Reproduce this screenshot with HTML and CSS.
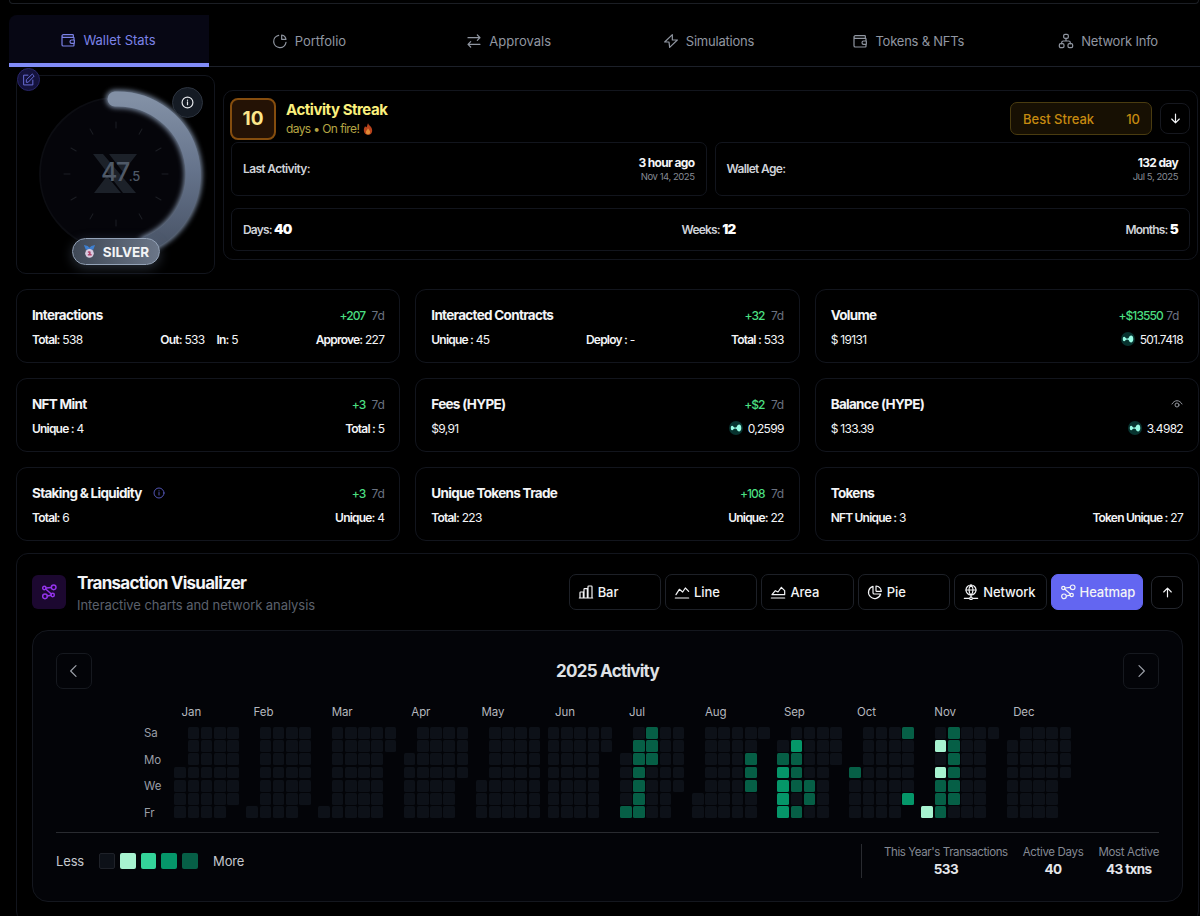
FILE: index.html
```html
<!DOCTYPE html>
<html lang="en">
<head>
    <meta charset="UTF-8">
    <meta name="viewport" content="width=device-width, initial-scale=1.0">
    <title>Wallet Stats</title>
    <link rel="stylesheet" href="styles.css">
</head>
<body>

    <!-- Shared icons -->
    <svg class="sprite">
        <symbol id="i-wallet" viewBox="0 0 24 24"><path d="M20 8V5a1 1 0 0 0-1-1H5a2 2 0 0 0 0 4h15a1 1 0 0 1 1 1v3M3 6v13a2 2 0 0 0 2 2h15a1 1 0 0 0 1-1v-3M21.500 12h-4a2.500 2.500 0 0 0 0 5h4z"/></symbol>
        <symbol id="i-pie" viewBox="0 0 24 24"><path d="M21.500 11a9 9 0 0 0-8-8v7a1 1 0 0 0 1 1zM9 3.500A9.300 9.300 0 1 0 20.500 15H11a2 2 0 0 1-2-2z"/></symbol>
        <symbol id="i-pie-line" viewBox="0 0 24 24"><path d="M21 9.500A8 8 0 0 0 14.500 3v6.500zM10 3.500A9.300 9.300 0 1 0 21 14"/></symbol>
        <symbol id="i-swap" viewBox="0 0 24 24"><path d="M3 7h18M17 3l4 4-4 4M21 17H3M7 13l-4 4 4 4"/></symbol>
        <symbol id="i-bolt" viewBox="0 0 24 24"><path d="M14 2.500L2.500 13.500H9L10 21.500L21.500 10.500H14z"/></symbol>
        <symbol id="i-tree" viewBox="0 0 24 24"><rect x="8.500" y="2" width="7" height="6" rx="2"/><rect x="2" y="16" width="7" height="6" rx="2"/><rect x="15" y="16" width="7" height="6" rx="2"/><path d="M12 8v4M5.500 16v-1.500a2.500 2.500 0 0 1 2.500-2.500h8a2.500 2.500 0 0 1 2.500 2.500V16"/></symbol>
        <symbol id="i-info" viewBox="0 0 24 24"><circle cx="12" cy="12" r="10"/><path d="M12 16v-5M12 7.500v.5"/></symbol>
        <symbol id="i-edit" viewBox="0 0 24 24"><path d="M11 4H3v18h17v-9M8 16.500v-4L19 2l3.500 3.500L12 16.500z"/></symbol>
        <symbol id="i-nodes" viewBox="0 0 24 24"><circle cx="19" cy="5" r="3.500"/><circle cx="5" cy="6" r="2.500"/><circle cx="6" cy="18.500" r="3.500"/><circle cx="17.500" cy="16.500" r="2.500"/><path d="M7.500 6l8-.8M7 7.500l8.500 7.500M9.500 18l5.500-1.200"/></symbol>
        <symbol id="i-hype" viewBox="0 0 14 14"><circle cx="7" cy="7" r="7" fill="#07332f"/><path d="M1.800 7c0-2.800 1.900-2.800 2.900-1 .6.700 2.200.7 3 0C8.300 2.800 12.300 2.400 12.300 7s-4 4.200-4.600 1c-.8-.7-2.400-.7-3 0-1 1.800-2.900 1.800-2.900-1z" fill="#97fce4"/></symbol>
    </svg>

    <div class="page">
        <div class="top-card"></div>

        <!-- Tabs -->
        <nav class="tabs">
            <a class="tab active"><svg class="icon"><use href="#i-wallet"/></svg><span>Wallet Stats</span></a>
            <a class="tab"><svg class="icon"><use href="#i-pie-line"/></svg><span>Portfolio</span></a>
            <a class="tab"><svg class="icon"><use href="#i-swap"/></svg><span>Approvals</span></a>
            <a class="tab"><svg class="icon"><use href="#i-bolt"/></svg><span>Simulations</span></a>
            <a class="tab"><svg class="icon"><use href="#i-wallet"/></svg><span>Tokens &amp; NFTs</span></a>
            <a class="tab"><svg class="icon"><use href="#i-tree"/></svg><span>Network Info</span></a>
        </nav>

        <!-- Score and streak -->
        <section class="overview">
            <div class="score">
                <svg class="dial" viewBox="0 0 198 198">
                    <defs>
                        <linearGradient id="arc" x1="0" y1="0" x2="0" y2="1">
                            <stop offset="0" stop-color="#8290a5"/>
                            <stop offset="0.5" stop-color="#65738b"/>
                            <stop offset="1" stop-color="#4a5568"/>
                        </linearGradient>
                        <filter id="glow" x="-30%" y="-30%" width="160%" height="160%">
                            <feGaussianBlur stdDeviation="2.500"/>
                        </filter>
                    </defs>
                    <circle cx="99" cy="98" r="76" fill="#05050a" stroke="#0c0d12"/>
                    <g id="ticks" class="ticks"></g>
                    <path d="M98 23A75.500 75.500 0 0 1 130 168" fill="none" stroke="#7b8ba3" stroke-width="18" stroke-linecap="round" filter="url(#glow)"/>
                    <path d="M98 23A75.500 75.500 0 0 1 130 168" fill="none" stroke="url(#arc)" stroke-width="15" stroke-linecap="round"/>
                    <path d="M76 78h10l33 39h-13zM92 78h28l-14 18zM77 117h27L90 100z" fill="#1c2129"/>
                    <text x="84" y="105" class="dial-num">47<tspan class="dial-dec">.5</tspan></text>
                </svg>
                <span class="edit-btn"><svg class="icon"><use href="#i-edit"/></svg></span>
                <span class="info-btn"><svg class="icon"><use href="#i-info"/></svg></span>
                <div class="rank">
                    <svg class="medal" viewBox="0 0 14 16"><path d="M1 1l4 1 2 2 2-2 4-1-2 5H3z" fill="#3e7fd0"/><circle cx="7" cy="10" r="4.600" fill="#d9cbe0"/><path d="M6 8.500h1.300v3M6 11.500h2.600" stroke="#b0426a" fill="none"/></svg>
                    <span>SILVER</span>
                </div>
            </div>

            <div class="streak">
                <div class="streak-head">
                    <div class="streak-count">10</div>
                    <div class="streak-title">
                        <h2>Activity Streak</h2>
                        <p>days • On fire! <svg class="flame" viewBox="0 0 12 14"><path d="M6 0c1 3 5 4 5 8.500S8.500 14 6 14 1 12 1 8.500C1 6 2 5 2.500 3.500 3 5 4 5 4 5 5 4 5 2 6 0z" fill="#b8431c"/><path d="M6 6c1 2 2.500 2.500 2.500 4.500S7.500 13.500 6 13.500s-2.500-1-2.500-3S5.500 8 6 6z" fill="#e08a35"/></svg></p>
                    </div>
                    <div class="best"><span>Best Streak</span><span>10</span></div>
                    <button class="sq-btn"><svg class="icon" viewBox="0 0 24 24"><path d="M12 4v16M5 13l7 7 7-7"/></svg></button>
                </div>
                <div class="streak-row">
                    <div class="fact"><b>Last Activity:</b><div class="when"><strong>3 hour ago</strong><small>Nov 14, 2025</small></div></div>
                    <div class="fact"><b>Wallet Age:</b><div class="when"><strong>132 day</strong><small>Jul 5, 2025</small></div></div>
                </div>
                <div class="totals">
                    <span>Days: <b>40</b></span>
                    <span>Weeks: <b>12</b></span>
                    <span>Months: <b>5</b></span>
                </div>
            </div>
        </section>

        <!-- Stat cards -->
        <section class="cards">
            <div class="card">
                <div class="line"><h3>Interactions</h3><span class="delta">+207 <i>7d</i></span></div>
                <div class="line vals"><span><b>Total:</b> 538</span><span class="pair"><span><b>Out:</b> 533</span><span><b>In:</b> 5</span></span><span><b>Approve:</b> 227</span></div>
            </div>
            <div class="card">
                <div class="line"><h3>Interacted Contracts</h3><span class="delta">+32 <i>7d</i></span></div>
                <div class="line vals"><span><b>Unique :</b> 45</span><span><b>Deploy :</b> -</span><span><b>Total :</b> 533</span></div>
            </div>
            <div class="card">
                <div class="line"><h3>Volume</h3><span class="delta tight">+$13550 <i>7d</i></span></div>
                <div class="line vals"><span>$ 19131</span><span class="coin"><svg><use href="#i-hype"/></svg>501.7418</span></div>
            </div>
            <div class="card">
                <div class="line"><h3>NFT Mint</h3><span class="delta">+3 <i>7d</i></span></div>
                <div class="line vals"><span><b>Unique :</b> 4</span><span><b>Total :</b> 5</span></div>
            </div>
            <div class="card">
                <div class="line"><h3>Fees (HYPE)</h3><span class="delta">+$2 <i>7d</i></span></div>
                <div class="line vals"><span>$9,91</span><span class="coin"><svg><use href="#i-hype"/></svg>0,2599</span></div>
            </div>
            <div class="card">
                <div class="line"><h3>Balance (HYPE)</h3><svg class="eye" viewBox="0 0 24 24"><path d="M2 12c5-9 15-9 20 0"/><circle cx="12" cy="14" r="4"/></svg></div>
                <div class="line vals"><span>$ 133.39</span><span class="coin"><svg><use href="#i-hype"/></svg>3.4982</span></div>
            </div>
            <div class="card">
                <div class="line"><h3>Staking &amp; Liquidity <svg class="hint"><use href="#i-info"/></svg></h3><span class="delta">+3 <i>7d</i></span></div>
                <div class="line vals"><span><b>Total:</b> 6</span><span><b>Unique:</b> 4</span></div>
            </div>
            <div class="card">
                <div class="line"><h3>Unique Tokens Trade</h3><span class="delta">+108 <i>7d</i></span></div>
                <div class="line vals"><span><b>Total:</b> 223</span><span><b>Unique:</b> 22</span></div>
            </div>
            <div class="card">
                <div class="line"><h3>Tokens</h3></div>
                <div class="line vals"><span><b>NFT Unique :</b> 3</span><span><b>Token Unique :</b> 27</span></div>
            </div>
        </section>

        <!-- Transaction visualizer -->
        <section class="visualizer">
            <div class="vis-head">
                <div class="vis-icon"><svg class="icon"><use href="#i-nodes"/></svg></div>
                <div class="vis-title">
                    <h2>Transaction Visualizer</h2>
                    <p>Interactive charts and network analysis</p>
                </div>
                <div class="modes">
                    <button class="mode"><svg class="icon" viewBox="0 0 24 24"><path d="M2 21h20M3 21v-8a1 1 0 0 1 1-1h4v9M9 21V8a1 1 0 0 1 1-1h4v14M15 21V4a1 1 0 0 1 1-1h4a1 1 0 0 1 1 1v17"/></svg>Bar</button>
                    <button class="mode"><svg class="icon" viewBox="0 0 24 24"><path d="M2 21h20M3 16l5-8 5 4 4-6 5 5"/></svg>Line</button>
                    <button class="mode"><svg class="icon" viewBox="0 0 24 24"><path d="M2 21h20M3 16l5-6 4 2 5-7 5 5v6z"/></svg>Area</button>
                    <button class="mode"><svg class="icon"><use href="#i-pie"/></svg>Pie</button>
                    <button class="mode"><svg class="icon" viewBox="0 0 24 24"><circle cx="12" cy="9" r="7.500"/><path d="M4.500 9h15M12 1.500c-4 4-4 11 0 15 4-4 4-11 0-15M12 16.500V20M2 21.500h7M15 21.500h7"/><circle cx="12" cy="21.500" r="2"/></svg>Network</button>
                    <button class="mode on"><svg class="icon"><use href="#i-nodes"/></svg>Heatmap</button>
                    <button class="sq-btn up"><svg class="icon" viewBox="0 0 24 24"><path d="M12 20V4M5 11l7-7 7 7"/></svg></button>
                </div>
            </div>

            <div class="panel">
                <div class="year">
                    <button class="step"><svg class="icon" viewBox="0 0 24 24"><path d="M15 4l-8 8 8 8"/></svg></button>
                    <h2>2025 Activity</h2>
                    <button class="step"><svg class="icon" viewBox="0 0 24 24"><path d="M9 4l8 8-8 8"/></svg></button>
                </div>
                <div class="heatmap">
                    <div class="days"><span>Sa</span><span>Mo</span><span>We</span><span>Fr</span></div>
                    <div class="months" id="months"></div>
                </div>
                <div class="foot">
                    <div class="legend">
                        <span>Less</span>
                        <div class="swatches"><i class="l0"></i><i class="l1"></i><i class="l2"></i><i class="l3"></i><i class="l4"></i></div>
                        <span>More</span>
                    </div>
                    <div class="summary">
                        <div class="sum"><span>This Year's Transactions</span><b>533</b></div>
                        <div class="sum"><span>Active Days</span><b>40</b></div>
                        <div class="sum"><span>Most Active</span><b>43 txns</b></div>
                    </div>
                </div>
            </div>
        </section>
    </div>

    <script src="script.js"></script>
</body>
</html>
```
FILE: styles.css
```css
* {
    box-sizing: border-box;
}

body {
    margin: 0;
    height: 916px;
    overflow: hidden;
    background-color: #000;
    color: #f3f4f6;
    font-family: Inter, Roboto, sans-serif;
}

h2, h3, p {
    margin: 0;
}

button {
    font-family: inherit;
    color: inherit;
    background: #000;
    padding: 0;
}

svg {
    fill: none;
    stroke: currentColor;
    stroke-width: 1.8;
    stroke-linecap: round;
    stroke-linejoin: round;
}

.sprite {
    display: none;
}

.icon {
    width: 16px;
    height: 16px;
    flex: none;
}

.page {
    padding-left: 9px;
}

.top-card {
    height: 4px;
    margin-right: 1px;
    border: 1px solid #1b1e24;
    border-top: 0;
    border-radius: 0 0 8px 8px;
}

/* Tabs */
.tabs {
    display: flex;
    height: 52px;
    margin-top: 11px;
    border-bottom: 1px solid #1c2029;
}

.tab {
    width: 199.800px;
    flex: none;
    display: flex;
    align-items: center;
    justify-content: center;
    gap: 7px;
    font-size: 13px;
    letter-spacing: -0.220px;
    color: #9096a1;
}

.tab.active {
    width: 200px;
    height: 52px;
    padding: 2px 2px 0 0;
    letter-spacing: 0;
    color: #7c83e8;
    background: #070714;
    border-bottom: 4px solid #818cf8;
    border-radius: 8px 0 0 0;
}

.tab:nth-child(2), .tab:nth-child(3) {
    letter-spacing: 0;
}

/* Score dial */
.overview {
    display: flex;
    align-items: flex-start;
    gap: 8px;
    padding: 8px 2px 0 7px;
}

.score {
    position: relative;
    width: 199px;
    height: 199px;
    border: 1px solid #12151d;
    border-radius: 10px;
}

.dial {
    width: 198px;
    height: 198px;
    stroke: none;
}

.ticks {
    stroke: #1c1e24;
    stroke-width: 1;
}

.dial-num {
    font-size: 25px;
    font-weight: 500;
    letter-spacing: -1.500px;
    fill: #4f5967;
}

.dial-dec {
    font-size: 13px;
    letter-spacing: -0.300px;
}

.edit-btn, .info-btn {
    position: absolute;
    display: flex;
    align-items: center;
    justify-content: center;
    border-radius: 50%;
}

.edit-btn {
    left: 0;
    top: -8px;
    width: 23px;
    height: 23px;
    color: #6a6fd8;
    background: #14123c;
    border: 1px solid #282568;
}

.edit-btn .icon {
    width: 13px;
    height: 13px;
}

.info-btn {
    right: 11px;
    top: 11px;
    width: 31px;
    height: 31px;
    color: #e5e7eb;
    background: #151b24;
    border: 1px solid #2c333e;
}

.info-btn .icon {
    width: 13px;
    height: 13px;
    stroke-width: 2.2;
}

.rank {
    position: absolute;
    left: 55px;
    top: 162px;
    width: 88px;
    height: 27px;
    display: flex;
    align-items: center;
    justify-content: center;
    gap: 7px;
    border: 1.500px solid #94a3b8;
    border-radius: 14px;
    background: linear-gradient(90deg, #3f4856, #6b7688);
    box-shadow: 0 3px 12px rgba(100, 116, 139, 0.4);
    font-size: 13.500px;
    font-weight: 700;
}

.medal {
    width: 13px;
    height: 15px;
    stroke: none;
}

/* Streak */
.streak {
    flex: 1;
    height: 170px;
    margin-top: 15px;
    padding: 6px 7px;
    border: 1px solid #12151d;
    border-radius: 10px;
}

.streak-head {
    display: flex;
    align-items: center;
    height: 43px;
}

.streak-count {
    width: 46px;
    height: 42px;
    margin-left: -1px;
    line-height: 38px;
    text-align: center;
    border: 2px solid #854d0e;
    border-radius: 8px;
    background: #241205;
    color: #fde68a;
    font-size: 19px;
    font-weight: 700;
}

.streak-title {
    margin-left: 10px;
    padding-top: 2px;
    flex: 1;
}

.streak-title h2 {
    font-size: 15px;
    line-height: 18px;
    letter-spacing: -0.450px;
    color: #fbf07c;
}

.streak-title p {
    font-size: 12px;
    line-height: 19px;
    letter-spacing: -0.600px;
    color: #b5a544;
}

.flame {
    width: 10px;
    height: 12px;
    stroke: none;
    vertical-align: -2px;
    margin-left: 1px;
}

.best {
    width: 142px;
    height: 33px;
    padding: 0 11px 0 12px;
    display: flex;
    align-items: center;
    justify-content: space-between;
    border: 1px solid #4a3c10;
    border-radius: 7px;
    background: #171003;
    color: #c68a10;
    font-size: 13px;
    font-weight: 500;
}

.sq-btn {
    display: flex;
    align-items: center;
    justify-content: center;
    width: 30px;
    height: 31px;
    margin-left: 8px;
    border: 1px solid #16181f;
    border-radius: 8px;
}

.sq-btn .icon {
    width: 13px;
    height: 13px;
    stroke-width: 2.200;
}

.streak-row {
    display: flex;
    gap: 8px;
    margin-top: 2px;
}

.fact, .totals {
    border: 1px solid #12151d;
    border-radius: 7px;
    display: flex;
    align-items: center;
    justify-content: space-between;
    padding: 0 11px 2px;
}

.fact {
    flex: 1;
    height: 54px;
    font-size: 12px;
    letter-spacing: -0.650px;
}

.fact > b, .totals {
    font-weight: 600;
    color: #cfd2d8;
}

.when {
    display: flex;
    flex-direction: column;
    align-items: flex-end;
    line-height: 15px;
    padding-top: 2px;
}

.when small {
    font-size: 9.500px;
    letter-spacing: -0.450px;
    line-height: 14px;
    color: #868b95;
}

.totals {
    height: 43px;
    margin-top: 12px;
    font-size: 12px;
    letter-spacing: -0.800px;
}

.totals b {
    color: #fff;
    font-size: 13.500px;
}

/* Cards */
.cards {
    display: grid;
    grid-template-columns: repeat(3, 1fr);
    gap: 15px;
    padding: 15px 1px 0 7px;
}

.card {
    height: 74px;
    padding: 15px 15px 0;
    border: 1px solid #12151d;
    border-radius: 11px;
}

.line {
    display: flex;
    align-items: center;
    justify-content: space-between;
    height: 20px;
}

.line h3 {
    font-size: 13.500px;
    font-weight: 700;
    letter-spacing: -0.700px;
}

.hint {
    width: 12px;
    height: 12px;
    margin-left: 9px;
    vertical-align: -1px;
    color: #5b5fc7;
}

.delta {
    font-size: 12px;
    font-weight: 500;
    letter-spacing: -0.900px;
    color: #4ade80;
}

.delta i {
    font-style: normal;
    font-weight: 400;
    margin-left: 4px;
    letter-spacing: -0.400px;
    color: #6b7280;
}

.delta.tight {
    margin-right: 4px;
}

.delta.tight i {
    margin-left: 1px;
}

.vals {
    height: 18px;
    margin-top: 5px;
    font-size: 12px;
    letter-spacing: -0.700px;
}

.vals b {
    font-weight: 600;
    letter-spacing: -0.800px;
}

.pair {
    display: flex;
    gap: 12px;
}

.coin {
    display: flex;
    align-items: center;
    gap: 5px;
}

.coin svg {
    width: 14px;
    height: 14px;
    stroke: none;
}

.eye {
    width: 12px;
    height: 12px;
    color: #a1a5ad;
}

/* Visualizer */
.visualizer {
    margin: 12px 1px 0 7px;
    height: 370px;
    padding: 19px 15px 0;
    border: 1px solid #12151d;
    border-radius: 12px;
}

.vis-head {
    display: flex;
    height: 38px;
    align-items: center;
}

.vis-icon {
    width: 34px;
    height: 34px;
    display: flex;
    align-items: center;
    justify-content: center;
    border-radius: 6px;
    background: #1c0830;
    color: #9333ea;
}

.vis-icon .icon {
    stroke-width: 2.200;
}

.vis-title {
    margin-left: 11px;
    padding-top: 4px;
    flex: 1;
}

.vis-title h2 {
    font-size: 17px;
    line-height: 22px;
    letter-spacing: -0.750px;
}

.vis-title p {
    font-size: 13px;
    line-height: 23px;
    letter-spacing: -0.060px;
    color: #5b606c;
}

.modes {
    display: flex;
    align-items: center;
    gap: 4px;
}

.mode {
    width: 92.400px;
    height: 36px;
    padding-left: 8px;
    display: flex;
    align-items: center;
    gap: 4px;
    border: 1px solid #1d2027;
    border-radius: 7px;
    font-size: 13px;
    font-weight: 500;
    letter-spacing: -0.100px;
}

.mode.on {
    background: #6366f1;
    border-color: #6366f1;
}

.sq-btn.up {
    width: 32px;
    height: 33px;
    margin-left: 4px;
    border-color: #23262d;
}

.panel {
    height: 272px;
    margin-top: 19px;
    padding: 22px 23px 0;
    border: 1px solid #14171e;
    border-radius: 16px;
    background: #030408;
}

.year {
    display: flex;
    align-items: center;
    justify-content: space-between;
}

.year h2 {
    font-size: 17px;
    letter-spacing: -0.750px;
    color: #dfe1e5;
}

.step {
    width: 36px;
    height: 36px;
    display: flex;
    align-items: center;
    justify-content: center;
    border: 1px solid #16191f;
    border-radius: 7px;
    background: #030408;
    color: #9ca0a8;
}

.heatmap {
    display: flex;
    margin: 14px 0 0 88px;
    font-size: 11.500px;
    letter-spacing: -0.100px;
}

.days {
    width: 30.300px;
    padding-top: 24px;
    color: #9a9ea7;
}

.days span {
    display: block;
    height: 26.500px;
    line-height: 13px;
}

.days span:last-child {
    height: 12px;
}

.months {
    display: flex;
    gap: 5.900px;
}

/* label sits over the first weeks of its month */
.month-name {
    height: 24px;
    line-height: 18px;
    padding-right: 32px;
    text-align: center;
    color: #b4b7be;
}

/* columns run Saturday to Friday */
.cells {
    display: grid;
    grid-template-rows: repeat(7, 11.650px);
    grid-auto-columns: 11.650px;
    grid-auto-flow: column;
    gap: 1.600px;
    width: max-content;
    padding-right: 1.600px;
}

.cells i {
    border-radius: 1.500px;
}

.l0 { background: #0d1118; }
.l1 { background: #a7f3d0; }
.l2 { background: #34d399; }
.l3 { background: #059669; }
.l4 { background: #065f46; }

.foot {
    display: flex;
    align-items: center;
    justify-content: space-between;
    margin-top: 13px;
    height: 58px;
    border-top: 1px solid #292b30;
}

.legend {
    display: flex;
    align-items: center;
    gap: 15px;
    font-size: 13px;
    letter-spacing: -0.150px;
    color: #c4c7cd;
}

.swatches {
    display: flex;
    gap: 5px;
}

.swatches i {
    width: 15.800px;
    height: 16px;
    border-radius: 2px;
}

.swatches .l0 {
    border: 1px solid #1f2229;
}

.summary {
    display: flex;
    gap: 15px;
    padding-left: 22px;
    border-left: 1px solid #292b30;
}

.sum {
    display: flex;
    flex-direction: column;
    align-items: center;
    height: 34px;
    font-size: 11.500px;
    line-height: 17px;
    letter-spacing: -0.400px;
    color: #858a94;
}

.sum:nth-child(n+2) {
    letter-spacing: -0.340px;
}

.sum b {
    font-size: 13.500px;
    line-height: 17px;
    letter-spacing: -0.600px;
    color: #e5e7eb;
}
```
FILE: script.js
```js
// name, first row, number of days, { day: level }
const months = [
    ['Jan', 3, 31, {}],
    ['Feb', 6, 28, {}],
    ['Mar', 6, 31, {}],
    ['Apr', 2, 30, {}],
    ['May', 4, 31, {}],
    ['Jun', 0, 30, {}],
    ['Jul', 2, 31, { 5: 4, 7: 4, 8: 4, 9: 4, 10: 4, 11: 4, 12: 4, 13: 4, 14: 4, 15: 4 }],
    ['Aug', 5, 31, { 26: 4, 27: 4, 28: 4 }],
    ['Sep', 1, 30, { 2: 4, 3: 3, 4: 3, 5: 3, 6: 3, 8: 3, 9: 4, 10: 4, 11: 4, 13: 4, 18: 4, 19: 4 }],
    ['Oct', 3, 31, { 1: 4, 26: 4, 31: 3 }],
    ['Nov', 6, 30, { 1: 1, 3: 1, 5: 1, 6: 4, 7: 4, 8: 4, 9: 4, 10: 4, 11: 4, 12: 4, 13: 4, 14: 4 }],
    ['Dec', 1, 31, {}]
];

document.getElementById('months').innerHTML = months.map(([name, start, days, levels]) => {
    let cells = '<i></i>'.repeat(start);
    for (let d = 1; d <= days; d++) {
        cells += `<i class="l${levels[d] || 0}"></i>`;
    }
    return `<div><div class="month-name">${name}</div><div class="cells">${cells}</div></div>`;
}).join('');

// Dial ticks
let ticks = '';
for (let a = 0; a < 360; a += 30) {
    ticks += `<path d="M99 46v6" transform="rotate(${a} 99 98)"/>`;
}
document.getElementById('ticks').innerHTML = ticks;
```
